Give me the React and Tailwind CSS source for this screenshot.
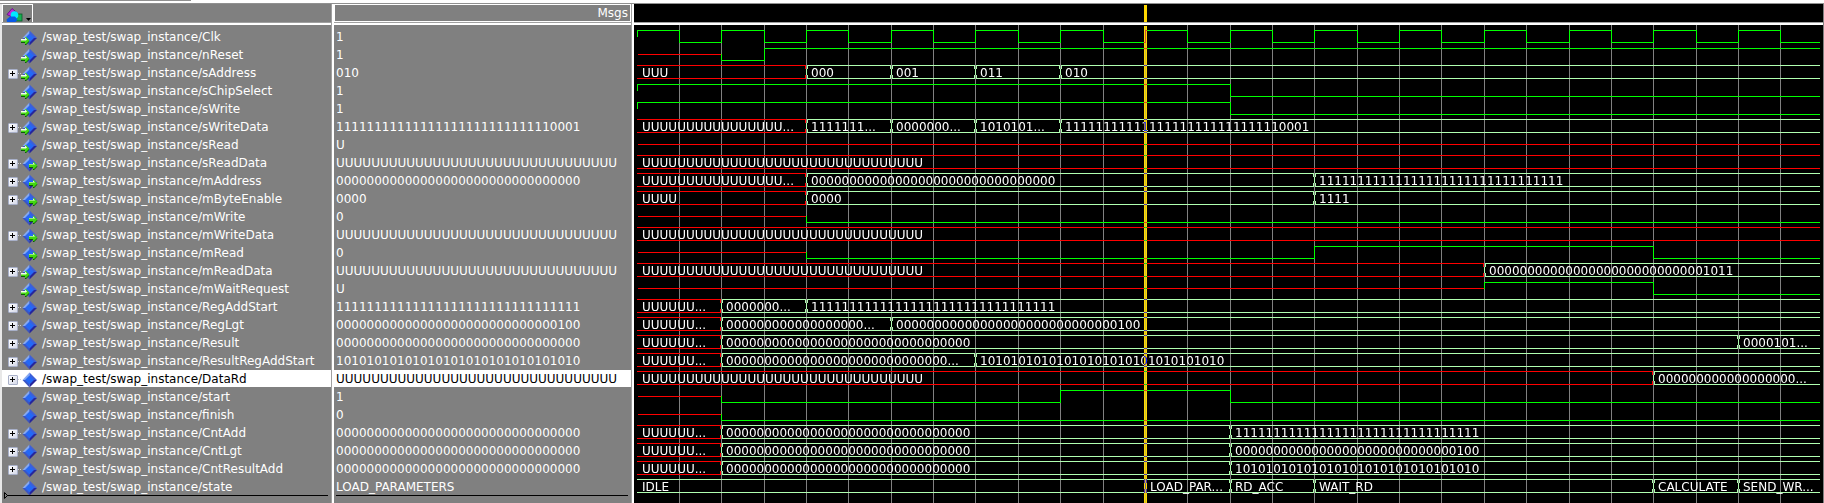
import React from "react";

const r = (ch, n) => ch.repeat(n);
const U32 = r("U", 32);
const Z32 = r("0", 32);
const O32 = r("1", 32);
const A32 = r("10", 16);
const WRITE_DATA = r("1", 28) + "0001";
const LENGTH = r("0", 29) + "100";

// Horizontal position of every clock edge inside the wave pane.
const EDGES = [
  45, 87, 130, 172, 214, 257, 299, 341, 384, 426, 469, 511, 553, 596, 638, 680,
  723, 765, 807, 850, 892, 935, 977, 1019, 1062, 1104, 1146,
];
const START = 3;
const END = 1186;
const ROW = 18;
const CURSOR_EDGE = 11;

const at = (edge) => (edge < 0 ? START : EDGES[edge]);
const clock = [[-1, "1"], ...EDGES.map((_, i) => [i, i % 2 ? "1" : "0"])];

// bit: [edge, level]; bus: [edge, label]
const SIGNALS = [
  { name: "Clk", value: "1", dir: "in", bit: clock },
  { name: "nReset", value: "1", dir: "in", bit: [[-1, "U"], [1, "0"], [2, "1"]] },
  { name: "sAddress", value: "010", dir: "in", bus: [[-1, "UUU"], [3, "000"], [5, "001"], [7, "011"], [9, "010"]] },
  { name: "sChipSelect", value: "1", dir: "in", bit: [[-1, "1"], [13, "0"]] },
  { name: "sWrite", value: "1", dir: "in", bit: [[-1, "1"], [13, "0"]] },
  { name: "sWriteData", value: WRITE_DATA, dir: "in", bus: [[-1, r("U", 16) + "..."], [3, "1111111..."], [5, "0000000..."], [7, "1010101..."], [9, WRITE_DATA]] },
  { name: "sRead", value: "U", dir: "in", bit: [[-1, "U"]] },
  { name: "sReadData", value: U32, dir: "out", bus: [[-1, U32]] },
  { name: "mAddress", value: Z32, dir: "out", bus: [[-1, r("U", 16) + "..."], [3, Z32], [15, O32]] },
  { name: "mByteEnable", value: "0000", dir: "out", bus: [[-1, "UUUU"], [3, "0000"], [15, "1111"]] },
  { name: "mWrite", value: "0", dir: "out", bit: [[-1, "U"], [3, "0"]] },
  { name: "mWriteData", value: U32, dir: "out", bus: [[-1, U32]] },
  { name: "mRead", value: "0", dir: "out", bit: [[-1, "U"], [3, "0"], [15, "1"], [23, "0"]] },
  { name: "mReadData", value: U32, dir: "in", bus: [[-1, U32], [19, r("0", 28) + "1011"]] },
  { name: "mWaitRequest", value: "U", dir: "in", bit: [[-1, "U"], [19, "1"], [23, "0"]] },
  { name: "RegAddStart", value: O32, bus: [[-1, "UUUUUU..."], [1, "0000000..."], [3, O32]] },
  { name: "RegLgt", value: LENGTH, bus: [[-1, "UUUUUU..."], [1, r("0", 18) + "..."], [5, LENGTH]] },
  { name: "Result", value: Z32, bus: [[-1, "UUUUUU..."], [1, Z32], [25, "0000101..."]] },
  { name: "ResultRegAddStart", value: A32, bus: [[-1, "UUUUUU..."], [1, r("0", 29) + "..."], [7, A32]] },
  { name: "DataRd", value: U32, selected: true, bus: [[-1, U32], [23, r("0", 18) + "..."]] },
  { name: "start", value: "1", bit: [[-1, "U"], [1, "0"], [9, "1"], [13, "0"]] },
  { name: "finish", value: "0", bit: [[-1, "U"], [1, "0"]] },
  { name: "CntAdd", value: Z32, bus: [[-1, "UUUUUU..."], [1, Z32], [13, O32]] },
  { name: "CntLgt", value: Z32, bus: [[-1, "UUUUUU..."], [1, Z32], [13, LENGTH]] },
  { name: "CntResultAdd", value: Z32, bus: [[-1, "UUUUUU..."], [1, Z32], [13, A32]] },
  { name: "state", value: "LOAD_PARAMETERS", scalar: true, bus: [[-1, "IDLE"], [11, "LOAD_PAR..."], [13, "RD_ACC"], [15, "WAIT_RD"], [23, "CALCULATE"], [25, "SEND_WR..."]] },
];

function SignalIcon({ dir }) {
  const arrow = "M0 2h4v-2h1l3.500 3.500l-3.500 3.500h-1v-2h-4z";
  return (
    <svg width="18" height="18" viewBox="0 0 18 18" aria-hidden="true" className="shrink-0">
      <path d="M8.500 1.500L1.500 9L8.500 9z" fill="#86a8f0" />
      <path d="M8.500 1.500L16 9L8.500 9z" fill="#3d5fd8" />
      <path d="M1.500 9L8.500 16.500L8.500 9z" fill="#3a55c4" />
      <path d="M16 9L8.500 16.500L8.500 9z" fill="#26269c" />
      <path d="M8.500 4.500L13 9L8.500 13.500L4 9z" fill="#2468f6" />
      {dir && (
        <g transform={dir === "in" ? "translate(0 8)" : "translate(8 7)"}>
          <path d={arrow} transform="translate(0 1)" fill="#0c5a08" />
          <path d={arrow} fill="#43d810" />
          <path
            d={dir === "in" ? "M0 2h4v-1.500l2 2l-1 1h-5z" : "M0 2h4v-1.500l2 2h-6z"}
            fill="#f2fdec"
          />
        </g>
      )}
    </svg>
  );
}

function Expander({ name }) {
  return (
    <button
      type="button"
      aria-label={"Expand " + name}
      className="flex size-[10px] shrink-0 items-center justify-center rounded-[1px] border border-[#a8b0c8] bg-linear-to-br from-white to-[#d4d8e8]"
    >
      <svg width="6" height="6" viewBox="0 0 6 6" aria-hidden="true" shapeRendering="crispEdges" className="shrink-0">
        <path d="M0 2h5v1h-5zM2 0h1v5h-1z" fill="#000" />
      </svg>
    </button>
  );
}

function NameRow({ signal }) {
  const expandable = signal.bus && !signal.scalar;
  return (
    <li
      className={
        "flex h-[18px] items-center border-t border-transparent bg-clip-padding pt-[2px] pl-[6px] " +
        (signal.selected ? "bg-white text-black" : "")
      }
    >
      <span className="flex w-[13px] shrink-0 items-center">
        {expandable && (
          <>
            <Expander name={signal.name} />
            <svg width="3" height="1" className="shrink-0" aria-hidden="true">
              <path d="M0 0h1v1h-1zM2 0h1v1h-1z" fill="#d0d0d0" />
            </svg>
          </>
        )}
      </span>
      <SignalIcon dir={signal.dir} />
      <span className="ml-[3px]">/swap_test/swap_instance/{signal.name}</span>
    </li>
  );
}

function BitTrace({ segments, y }) {
  const level = { 1: y - 6, 0: y + 6, U: y };
  return segments.map(([edge, v], i) => {
    const x = at(edge);
    const next = i + 1 < segments.length ? at(segments[i + 1][0]) : END;
    const ly = level[v];
    if (v === "U") return <rect key={i} x={x + 1} y={ly} width={next - x - 1} height="1" fill="#f00" />;
    const from = i === 0 ? y : level[segments[i - 1][1]];
    return (
      <g key={i} fill="#0f0">
        <rect x={x} y={ly} width={next - x} height="1" />
        <rect x={x} y={Math.min(from, ly)} width="1" height={Math.abs(from - ly) + 1} />
      </g>
    );
  });
}

function BusTrace({ segments, y }) {
  return segments.map(([edge, label], i) => {
    const x = at(edge);
    const last = i + 1 === segments.length;
    const first = i === 0;
    const left = first ? x : x + 1;
    const right = last ? END : at(segments[i + 1][0]);
    const color = label[0] === "U" ? "#f00" : "#b0ffb0";
    return (
      <g key={i} fill={color}>
        <rect x={left} y={y - 7} width={right - left} height="1" />
        <rect x={left} y={y + 6} width={right - left} height="1" />
        {!first && (
          <>
            <rect x={x + 1} y={y - 7} width="1" height="4" />
            <rect x={x + 1} y={y + 3} width="1" height="4" />
            <rect x={x} y={y - 3} width="1" height="6" />
          </>
        )}
        {!last && (
          <>
            <rect x={right - 1} y={y - 7} width="1" height="4" />
            <rect x={right - 1} y={y + 3} width="1" height="4" />
          </>
        )}
        <text x={x + 5} y={y + 5} fill="#fff">
          {label}
        </text>
      </g>
    );
  });
}

function Waves() {
  const cx = EDGES[CURSOR_EDGE];
  return (
    <svg role="img" aria-label="Signal waveforms" className="isolate block h-[478px] w-full bg-black text-[12px]">
      <g shapeRendering="crispEdges">
        {EDGES.map((x, i) =>
          i === CURSOR_EDGE ? null : <rect key={x} x={x} y="0" width="1" height="100%" fill="#808080" />
        )}
        {SIGNALS.map((s, i) => {
          const y = 11 + i * ROW;
          return s.bit ? (
            <BitTrace key={s.name} segments={s.bit} y={y} />
          ) : (
            <BusTrace key={s.name} segments={s.bus} y={y} />
          );
        })}
        <rect x={cx - 1} y="1" width="3" height="100%" fill="#ffd800" className="mix-blend-difference" />
        <rect x={cx} y="1" width="1" height="100%" fill="#80a080" opacity="0.4" />
      </g>
    </svg>
  );
}

function HeaderRule() {
  return <div className="h-[3px] shrink-0 border-t border-[#a0a0a0] bg-white" />;
}

function Divider() {
  return <div className="w-[3px] shrink-0 border-l border-[#a0a0a0] bg-white" />;
}

export default function App() {
  return (
    <main className="flex min-h-screen flex-col overflow-hidden bg-[#e8e8e8] font-['DejaVu_Sans',sans-serif] text-[12px] leading-[17px] whitespace-nowrap text-white">
      <div className="h-[4px] shrink-0 border-b border-[#909090] bg-white">
        <div className="h-px w-[191px] bg-[#909090]" />
      </div>
      <div className="flex grow pl-[2px]">
        <section aria-label="Signals" className="flex w-[329px] shrink-0 flex-col bg-[#808080]">
          <div className="flex h-[18px]">
            <button
              type="button"
              aria-label="Object filter"
              className="flex w-[31px] items-end border border-b-0 border-white pl-[3px]"
            >
              <svg width="26" height="16" viewBox="0 0 26 16" aria-hidden="true" className="shrink-0">
                <path d="M6 2.500L12 7.500L7 11.500L1 8.500z" fill="#c026d8" stroke="#5c0a80" strokeWidth="0.800" />
                <rect x="9" y="8" width="7" height="7" fill="#18b050" stroke="#0a5a28" strokeWidth="0.800" />
                <circle cx="8.500" cy="9" r="3.800" fill="#00e8ff" />
                <path d="M4 10.500h5l2.500 3l-2 2.500h-8.500l-.500-2.500z" fill="#0858e8" />
                <path d="M20 12h5l-2.500 3z" fill="#000" />
              </svg>
            </button>
          </div>
          <HeaderRule />
          <ul className="pt-[2px]">
            {SIGNALS.map((s) => (
              <NameRow key={s.name} signal={s} />
            ))}
          </ul>
          <svg width="100%" height="7" className="mt-[-3px] shrink-0 overflow-visible" aria-hidden="true">
            <path d="M2.500 .500v6l3 -3z" fill="none" stroke="#000" />
            <rect x="5" y="3" width="321" height="1" fill="#000" />
          </svg>
        </section>
        <Divider />
        <section aria-label="Values" className="flex w-[297px] shrink-0 flex-col bg-[#808080]">
          <div className="h-[18px] border border-white pr-[2px] text-right">Msgs</div>
          <HeaderRule />
          <ul className="pt-[2px]">
            {SIGNALS.map((s) => (
              <li
                key={s.name}
                className={
                  "h-[18px] border-t border-transparent bg-clip-padding pt-px pl-[2px] " +
                  (s.selected ? "bg-white text-black" : "")
                }
              >
                {s.value}
              </li>
            ))}
          </ul>
          <div className="mr-[3px] ml-[2px] h-px bg-black" />
        </section>
        <Divider />
        <section aria-label="Waveforms" className="flex min-w-0 grow flex-col border-r border-[#808080] bg-black">
          <div className="flex h-[18px] items-end">
            <svg width="100%" height="17" aria-hidden="true" shapeRendering="crispEdges">
              <rect x={EDGES[CURSOR_EDGE] - 1} y="0" width="3" height="17" fill="#ffd800" />
            </svg>
          </div>
          <HeaderRule />
          <Waves />
        </section>
      </div>
    </main>
  );
}
